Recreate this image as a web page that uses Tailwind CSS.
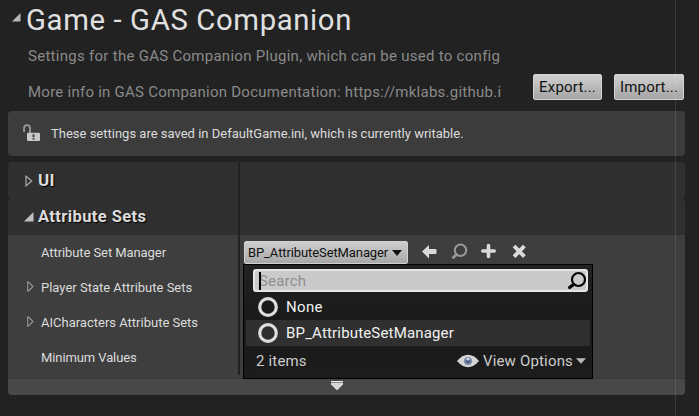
<!DOCTYPE html>
<html lang="en">
<head>
<meta charset="utf-8">
<title>Game - GAS Companion</title>
<script src="https://cdn.jsdelivr.net/npm/@tailwindcss/browser@4"></script>
</head>
<body class="bg-[#222222] overflow-hidden">
<main class="relative w-[699px] h-[416px] overflow-hidden bg-[#222222] font-['Roboto',sans-serif] text-[13px] text-[#dcdcdc] whitespace-nowrap px-2">
  <header class="h-[111px] flex flex-col">
    <div class="h-[40px] flex items-start pl-1">
      <svg class="mt-[13px] w-[9px] h-[9px] shrink-0" viewBox="0 0 9 9"><path d="M8.5 0V8.5H0Z" fill="#b8b8b8"/></svg>
      <h1 class="ml-[5px] text-[29.3px] leading-[40px] tracking-[0.62px] text-[#e0e0e0]">Game - GAS Companion</h1>
    </div>
    <div class="flex pl-5">
      <div class="w-[474px] overflow-hidden text-[15px] text-[#8a8a8a]">
        <p class="h-[36px] leading-[32px] tracking-[0.28px]">Settings for the GAS Companion Plugin, which can be used to config</p>
        <p class="leading-[32px] tracking-[0.25px]">More info in GAS Companion Documentation: https://mklabs.github.i</p>
      </div>
      <div class="flex gap-3 pt-[34px] ml-[31px] text-[15px] tracking-[0.2px] text-[#111]">
        <button class="w-[69px] h-[26px] rounded-[2px] border border-[#d5d5d5] bg-linear-to-b from-[#d0d0d0] to-[#a5a5a5]">Export...</button>
        <button class="w-[70px] h-[26px] rounded-[2px] border border-[#d5d5d5] bg-linear-to-b from-[#d0d0d0] to-[#a5a5a5]">Import...</button>
      </div>
    </div>
  </header>

  <section class="w-[677px] h-[45px] rounded-[4px] bg-[#3c3c3c] flex items-center pl-[15px]">
    <svg class="w-[18px] h-[18px] -mt-[2px]" viewBox="0 0 18 18"><path d="M1 8V4.5Q1 1.2 4 1.2T7 4.5V9" fill="none" stroke="#999" stroke-width="1.8"/><rect x="4" y="8.8" width="13" height="8.2" rx="1" fill="#c8c8c8"/><path d="M10.5 10.2V13.3M10.5 14.2V15.8" stroke="#444" stroke-width="2"/></svg>
    <span class="ml-[10px]">These settings are saved in DefaultGame.ini, which is currently writable.</span>
  </section>

  <section class="mt-1.5 w-[677px] h-[233px] relative flex flex-col">
    <div class="h-[36px] rounded-[4px] bg-[#303030] flex items-center pl-[17px]">
      <svg class="w-2 h-3 mt-[2px]" viewBox="0 0 8 12"><path d="M1 1.2V10.8L6.8 6Z" fill="none" stroke="#aaa" stroke-width="1.2"/></svg>
      <h2 class="ml-[5px] mt-px text-[17px] font-bold tracking-[0.2px] [text-shadow:1px_1px_1px_#000]">UI</h2>
    </div>
    <div class="h-[37px] rounded-t-[4px] bg-[#303030] flex items-center pl-4">
      <svg class="w-[10px] h-[10px]" viewBox="0 0 10 10"><path d="M9.5 0V9.5H0Z" fill="#c0c0c0"/></svg>
      <h2 class="ml-[4px] mt-[2px] text-[16.5px] font-bold tracking-[0.4px] [text-shadow:1px_1px_1px_#000]">Attribute Sets</h2>
    </div>
    <div class="h-[144px] bg-[#3e3e3e] border-b border-[#383838] flex">
      <div class="w-[230px]">
        <div class="h-[35px] flex items-center pl-[33px] tracking-[-0.08px]">Attribute Set Manager</div>
        <div class="h-[35px] flex items-center pl-[19px]"><svg class="w-[7px] h-[11px] mr-[7px] -mt-[3px]" viewBox="0 0 7 11"><path d="M.7 1V10H1.6L6 5.5L1.6 1Z" fill="none" stroke="#999" stroke-width="1.1"/></svg>Player State Attribute Sets</div>
        <div class="h-[35px] flex items-center pl-[19px]"><svg class="w-[7px] h-[11px] mr-[7px] -mt-[3px]" viewBox="0 0 7 11"><path d="M.7 1V10H1.6L6 5.5L1.6 1Z" fill="none" stroke="#999" stroke-width="1.1"/></svg>AICharacters Attribute Sets</div>
        <div class="h-[35px] flex items-center pl-[33px] tracking-[-0.1px]">Minimum Values</div>
      </div>
      <div class="flex h-[30px] pt-[6px] pl-[6px]">
        <button class="w-[164px] h-[23px] rounded-[2px] border border-[#d0d0d0] bg-linear-to-b from-[#cecece] to-[#a8a8a8] text-[#111] flex items-center pl-[3px] text-[13px] tracking-[-0.1px]"><span>BP_AttributeSetManager</span><svg class="ml-[4px] w-[10px] h-[6px]" viewBox="0 0 10 6"><path d="M0 0H10L5 6Z" fill="#111"/></svg></button>
        <svg class="ml-[13px] w-[108px] h-[20px]" viewBox="0 0 108 20"><path d="M1 10.5L8 4V8H14.5Q15.5 8 15.5 9V12Q15.5 13 14.5 13H8V17.5Z" fill="#dadada"/><g fill="none" stroke="#999"><circle cx="39.5" cy="9.2" r="5.7" stroke-width="2"/><path d="M35.5 13.5L31.5 17.3" stroke-width="2.8"/></g><path d="M61.8 10H73.2M67.5 4.5V15.5" stroke="#dadada" stroke-width="3.6" stroke-linecap="round"/><path d="M94.4 6.4L102 14.2M102 6.4L94.4 14.2" stroke="#dadada" stroke-width="3.9" stroke-linecap="square"/></svg>
      </div>
    </div>
    <div class="h-[16px] rounded-b-[4px] bg-[#484848] pl-[323px] pt-[2px]">
      <svg class="w-3 h-[9px]" viewBox="0 0 12 9"><path d="M0 .5H12" stroke="#eee" stroke-width="1"/><path d="M0 1.5H12" stroke="#888" stroke-width="1"/><path d="M0 2H12V3.5L6.5 9H5.5L0 3.5Z" fill="#d8d8d8"/></svg>
    </div>
    <div class="absolute left-[230px] top-0 w-[2px] h-[213px] bg-[#222222]"></div>
  </section>

  <div class="absolute left-[243px] top-[264px] w-[350px] h-[115px] border border-black bg-linear-to-b from-[#222] via-[#191919] to-[#1c1c1c] text-[15px] tracking-[0.17px] px-[2px]">
    <div class="ml-[7px] mt-[4px] w-[335px] h-[23px] rounded-[3px] border-2 border-[#e6e6e6] bg-[#cacaca] flex items-center pl-[4px] text-[#8e8e8e] relative">
      <i class="absolute left-[4px] top-[1px] w-[2px] h-[18px] bg-black"></i><span class="mt-[2px]">Search</span>
      <svg class="ml-auto w-[19px] h-[19px]" viewBox="0 0 19 19" fill="none" stroke="#050505"><circle cx="11.5" cy="8.5" r="6.5" stroke-width="2.2"/><path d="M6.5 13.5L2.6 16.6" stroke-width="3.2" stroke-linecap="round"/></svg>
    </div>
    <div class="h-[28px] flex items-center pt-[2px] pl-[12px] text-[#f0f0f0] tracking-[0.35px]"><svg class="w-5 h-5 mr-[8px]" viewBox="0 0 20 20"><circle cx="10" cy="10" r="8.3" fill="none" stroke="#dedede" stroke-width="3.2"/></svg>None</div>
    <div class="h-[26px] bg-[#303030] flex items-center pl-[12px] text-[#f0f0f0]"><svg class="w-5 h-5 mr-[8px]" viewBox="0 0 20 20"><circle cx="10" cy="10" r="8.3" fill="none" stroke="#dedede" stroke-width="3.2"/></svg>BP_AttributeSetManager</div>
    <div class="h-[30px] flex items-center pl-[10px] pr-[4px] text-[#cccccc]"><span>2 items</span>
      <svg class="ml-auto w-[22px] h-[14px]" viewBox="0 0 22 14"><path d="M0 7Q11-5.5 22 7Q11 19.5 0 7Z" fill="#d6d6d6"/><circle cx="11" cy="7" r="4.1" fill="#7b8ead"/><circle cx="11" cy="7.2" r="2" fill="#465a80"/><circle cx="11" cy="5" r="1.5" fill="#d2d9e2"/></svg>
      <span class="ml-[4px]">View Options</span>
      <svg class="ml-[3px] w-[10px] h-[6px]" viewBox="0 0 11 6"><path d="M0 0H11L5.5 6Z" fill="#bbb"/></svg>
    </div>
  </div>
  <div class="absolute left-[675px] top-0 w-px h-full bg-white/10"></div>
</main>
</body>
</html>
